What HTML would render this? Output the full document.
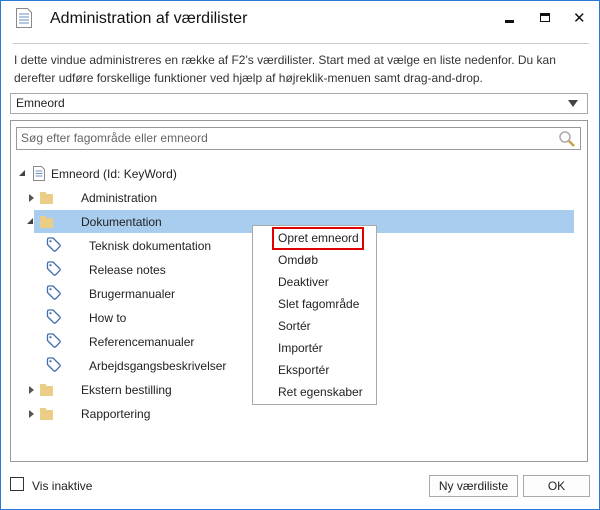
<!DOCTYPE html>
<html><head><style>
*{box-sizing:border-box;margin:0;padding:0}
body{width:600px;height:510px;overflow:hidden;background:#fff;font-family:"Liberation Sans",sans-serif;font-size:12px;color:#222;position:relative}
.a{position:absolute;white-space:nowrap}
.win{position:absolute;left:0;top:0;width:600px;height:510px;border:1px solid #2b79d6}
.row{position:absolute;font-size:12px;line-height:16px}
.fold{position:absolute;width:13px;height:10px;background:#eccd85;border-radius:1px}
.fold:before{content:"";position:absolute;left:0;top:-2px;width:6px;height:3px;background:#eccd85}
.tri{position:absolute;width:0;height:0;border-top:4px solid transparent;border-bottom:4px solid transparent;border-left:5px solid #555}
.mi{position:absolute;left:278px;font-size:12px}
</style></head><body>
<div class="win"></div>
<svg class="a" style="left:15px;top:7px" width="18" height="22" viewBox="0 0 18 22"><path d="M1.5 1.5h11l4 4v15h-15z" fill="#fff" stroke="#888"/><path d="M4 7h10M4 10h10M4 13h10M4 16h10" stroke="#6b8fc2"/></svg>
<div class="a" style="left:50px;top:10px;font-size:16px;color:#111">Administration af værdilister</div>
<div class="a" style="left:505px;top:20px;width:9px;height:3px;background:#111"></div>
<div class="a" style="left:540px;top:13px;width:10px;height:9px;border:1px solid #111;border-top-width:3px"></div>
<div class="a" style="left:573px;top:9px;font-size:15px;color:#111">✕</div>
<div class="a" style="left:13px;top:43px;width:576px;height:1px;background:#ccc"></div>
<div class="a" style="left:14px;top:51px;font-size:12px;line-height:18px;color:#333">I dette vindue administreres en række af F2's værdilister. Start med at vælge en liste nedenfor. Du kan<br>derefter udføre forskellige funktioner ved hjælp af højreklik-menuen samt drag-and-drop.</div>
<div class="a" style="left:10px;top:93px;width:578px;height:21px;border:1px solid #aaa"></div>
<div class="a" style="left:16px;top:96px">Emneord</div>
<div class="a" style="left:568px;top:100px;border-left:5px solid transparent;border-right:5px solid transparent;border-top:7px solid #444"></div>
<div class="a" style="left:10px;top:120px;width:578px;height:342px;border:1px solid #999"></div>
<div class="a" style="left:16px;top:127px;width:565px;height:23px;border:1px solid #999"></div>
<div class="a" style="left:21px;top:131px;color:#666">Søg efter fagområde eller emneord</div>
<svg class="a" style="left:557px;top:129px" width="20" height="20"><circle cx="8" cy="8" r="5" fill="none" stroke="#aaa" stroke-width="1.5"/><path d="M12 12l5 5" stroke="#c9a040" stroke-width="2.5"/></svg>
<div class="a" style="left:34px;top:210px;width:540px;height:23px;background:#a9cdef"></div>
<div class="a" style="left:19px;top:170px;border-left:6px solid transparent;border-bottom:6px solid #444"></div>
<svg class="a" style="left:32px;top:165px" width="14" height="17"><path d="M1.5 1.5h8l3 3v11h-11z" fill="#fff" stroke="#888"/><path d="M3.5 6h7M3.5 8.5h7M3.5 11h7" stroke="#6b8fc2"/></svg>
<div class="row" style="left:51px;top:166px">Emneord (Id: KeyWord)</div>
<div class="tri" style="left:29px;top:194px"></div><div class="fold" style="left:40px;top:194px"></div><div class="row" style="left:81px;top:190px">Administration</div>
<div class="a" style="left:27px;top:218px;border-left:6px solid transparent;border-bottom:6px solid #444"></div><div class="fold" style="left:40px;top:218px"></div><div class="row" style="left:81px;top:214px">Dokumentation</div>
<div class="tri" style="left:29px;top:386px"></div><div class="fold" style="left:40px;top:386px"></div><div class="row" style="left:81px;top:382px">Ekstern bestilling</div>
<div class="tri" style="left:29px;top:410px"></div><div class="fold" style="left:40px;top:410px"></div><div class="row" style="left:81px;top:406px">Rapportering</div>
<svg width="0" height="0" style="position:absolute"><defs><g id="tag"><path d="M1.5 2.5 Q1.5 1 3 1 L7 1 L14 8 Q14.5 8.7 14 9.3 L9.3 14 Q8.7 14.5 8 14 L1.5 7.5z" fill="#fff" stroke="#3f6fb0" stroke-width="1.3" stroke-linejoin="round"/><circle cx="4.5" cy="4.2" r="1.1" fill="#3f6fb0"/></g></defs></svg>
<svg class="a" style="left:46px;top:237px" width="16" height="16"><use href="#tag"/></svg><div class="row" style="left:89px;top:238px">Teknisk dokumentation</div>
<svg class="a" style="left:46px;top:261px" width="16" height="16"><use href="#tag"/></svg><div class="row" style="left:89px;top:262px">Release notes</div>
<svg class="a" style="left:46px;top:285px" width="16" height="16"><use href="#tag"/></svg><div class="row" style="left:89px;top:286px">Brugermanualer</div>
<svg class="a" style="left:46px;top:309px" width="16" height="16"><use href="#tag"/></svg><div class="row" style="left:89px;top:310px">How to</div>
<svg class="a" style="left:46px;top:333px" width="16" height="16"><use href="#tag"/></svg><div class="row" style="left:89px;top:334px">Referencemanualer</div>
<svg class="a" style="left:46px;top:357px" width="16" height="16"><use href="#tag"/></svg><div class="row" style="left:89px;top:358px">Arbejdsgangsbeskrivelser</div>
<div class="a" style="left:252px;top:225px;width:125px;height:180px;background:#fff;border:1px solid #aaa"></div>
<div class="a" style="left:272px;top:227px;width:92px;height:23px;border:2px solid #e00000"></div>
<div class="mi" style="top:231px">Opret emneord</div>
<div class="mi" style="top:253px">Omdøb</div>
<div class="mi" style="top:275px">Deaktiver</div>
<div class="mi" style="top:297px">Slet fagområde</div>
<div class="mi" style="top:319px">Sortér</div>
<div class="mi" style="top:341px">Importér</div>
<div class="mi" style="top:363px">Eksportér</div>
<div class="mi" style="top:385px">Ret egenskaber</div>
<div class="a" style="left:10px;top:477px;width:14px;height:14px;border:1px solid #333"></div>
<div class="a" style="left:32px;top:479px">Vis inaktive</div>
<div class="a" style="left:429px;top:475px;width:89px;height:22px;border:1px solid #aaa;background:#fdfdfd;text-align:center;line-height:20px">Ny værdiliste</div>
<div class="a" style="left:523px;top:475px;width:67px;height:22px;border:1px solid #aaa;background:#fdfdfd;text-align:center;line-height:20px">OK</div>
</body></html>
